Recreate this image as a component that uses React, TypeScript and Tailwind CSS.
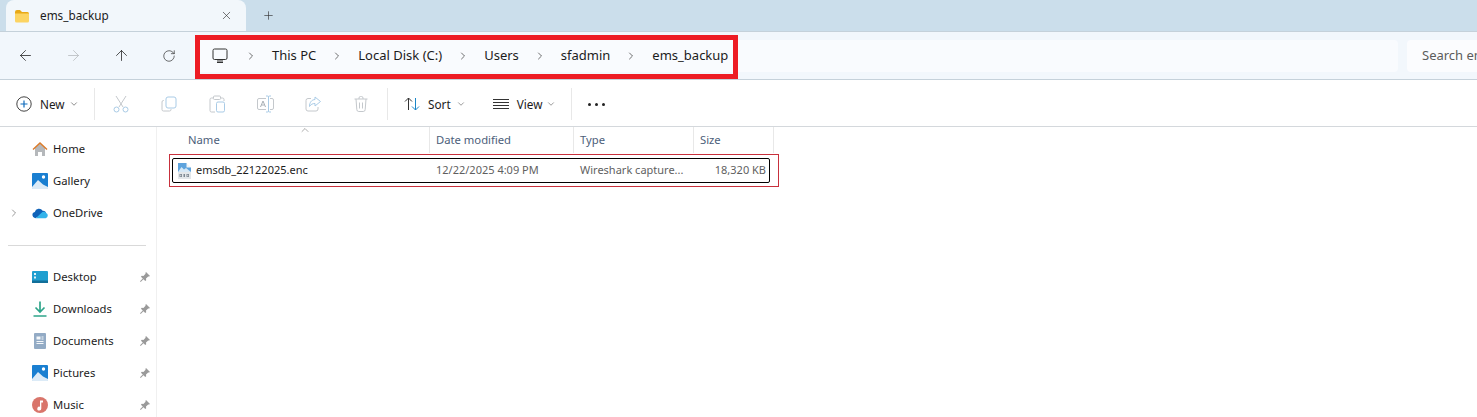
import type React from "react"
import { ArrowLeft, ArrowRight, ArrowUp, ChevronDown, ChevronRight, ChevronUp, Plus, RotateCw, X } from "lucide-react"

const FONT = "font-['Noto_Sans','Open_Sans',sans-serif]"

const Folder = () => (
  <svg width="16" height="14" viewBox="0 0 16 14">
    <path d="M1 3a2 2 0 0 1 2-2h3l2 2h5.500a1.500 1.500 0 0 1 1.500 1.500V5H1z" fill="#e8a917" />
    <path d="M1 4.500h14V12a1.500 1.500 0 0 1-1.500 1.500h-11A1.500 1.500 0 0 1 1 12z" fill="#fcd462" />
  </svg>
)

const Monitor = () => (
  <svg width="16" height="16" viewBox="0 0 16 16" fill="none" stroke="#333" strokeWidth="1">
    <rect x="1" y="1" width="14" height="10.500" rx="1.500" />
    <path d="M5 14.500h6M8 11.500v3M6 11.500v3M10 11.500v3" />
  </svg>
)

// toolbar glyphs: grey body with the light blue accent of the disabled state
const Cut = () => (
  <svg width="16" height="18" viewBox="0 0 16 18" fill="none" strokeWidth="1">
    <path d="M3 1l7 11M13 1L6 12" stroke="#c4c8cc" />
    <circle cx="3.500" cy="14.500" r="2.500" stroke="#a9cbe6" />
    <circle cx="12.500" cy="14.500" r="2.500" stroke="#a9cbe6" />
  </svg>
)
const Copy = () => (
  <svg width="16" height="16" viewBox="0 0 16 16" fill="none" strokeWidth="1">
    <path d="M3 4.500h-.5A1.500 1.500 0 0 0 1 6v7.500A1.500 1.500 0 0 0 2.500 15h6A1.500 1.500 0 0 0 10 13.500V13" stroke="#c4c8cc" />
    <rect x="5" y="1" width="10" height="11" rx="2" stroke="#a9cbe6" />
  </svg>
)
const Paste = () => (
  <svg width="16" height="18" viewBox="0 0 16 18" fill="none" strokeWidth="1">
    <path d="M4 3H2.500A1.500 1.500 0 0 0 1 4.500v11A1.500 1.500 0 0 0 2.500 17H6M12 3h1.500A1.500 1.500 0 0 1 15 4.500V6" stroke="#c4c8cc" />
    <rect x="4.500" y="1" width="7" height="3.500" rx="1" stroke="#c4c8cc" />
    <rect x="7.500" y="7" width="8" height="10" rx="1.500" stroke="#a9cbe6" />
  </svg>
)
const Rename = () => (
  <svg width="17" height="18" viewBox="0 0 17 18" fill="none" strokeWidth="1">
    <path d="M9 3.500H2A1.500 1.500 0 0 0 .5 5v8A1.500 1.500 0 0 0 2 14.500h7M13 3.500h2A1.500 1.500 0 0 1 16.500 5v8a1.500 1.500 0 0 1-1.500 1.500h-2" stroke="#c4c8cc" />
    <path d="M3.500 12l2.500-6 2.500 6M4.500 10h3" stroke="#a9b0b6" />
    <path d="M9 1h1.500a1 1 0 0 1 1 1v14a1 1 0 0 1-1 1H9M14 1h-1.500a1 1 0 0 0-1 1M14 17h-1.500a1 1 0 0 1-1-1" stroke="#a9cbe6" />
  </svg>
)
const Share = () => (
  <svg width="16" height="16" viewBox="0 0 16 16" fill="none" strokeWidth="1">
    <path d="M6 2.500H3A2 2 0 0 0 1 4.500V13a2 2 0 0 0 2 2h8a2 2 0 0 0 2-2v-2" stroke="#c4c8cc" />
    <path d="M10 1l5.500 4.500L10 10V7.500c-2.500 0-4 .8-5.500 3C4.500 6.500 6.500 3.800 10 3.500z" stroke="#a9cbe6" />
  </svg>
)
const Trash = () => (
  <svg width="14" height="16" viewBox="0 0 14 16" fill="none" stroke="#c4c8cc" strokeWidth="1">
    <path d="M.5 3h13M5 3V2a1.500 1.500 0 0 1 1.500-1.500h1A1.500 1.500 0 0 1 9 2v1M2 3l.8 10.500A2 2 0 0 0 4.800 15.500h4.400a2 2 0 0 0 2-2L12 3M5.500 6.500v6M8.500 6.500v6" />
  </svg>
)
const Sort = () => (
  <svg width="16" height="14" viewBox="0 0 16 14" fill="none" strokeWidth="1">
    <path d="M4.500 13V1M1 4.500L4.500 1 8 4.500" stroke="#333" />
    <path d="M11.500 1v12M8 9.500l3.500 3.500L15 9.500" stroke="#1a86c8" />
  </svg>
)
const ViewIcon = () => (
  <svg width="16" height="10" viewBox="0 0 16 10" fill="none" stroke="#333" strokeWidth="1">
    <path d="M0 .5h16M0 3.500h16M0 6.500h16M0 9.500h16" />
  </svg>
)
const NewIcon = () => (
  <svg width="16" height="16" viewBox="0 0 16 16" fill="none" strokeWidth="1">
    <circle cx="8" cy="8" r="7.200" stroke="#444" />
    <path d="M8 4.500v7M4.500 8h7" stroke="#0f6cbd" strokeWidth="1.200" />
  </svg>
)

const Home = () => (
  <svg width="16" height="16" viewBox="0 0 16 16">
    <path d="M3 7l5-4.500L13 7v7.500a.5.5 0 0 1-.5.5H10v-4H6v4H3.500a.5.5 0 0 1-.5-.5z" fill="#b5b8bb" />
    <path d="M.5 8L8 1l7.500 7-1 1L8 3 1.500 9z" fill="#db7b2b" />
  </svg>
)
const Gallery = () => (
  <svg width="16" height="16" viewBox="0 0 16 16">
    <rect x="0" y="0" width="16" height="16" rx="1" fill="#1a7fd1" />
    <circle cx="11.500" cy="4" r="1.700" fill="#fff" />
    <path d="M0 14l6-7 5 4.500 5 2.500v1.500a.5.5 0 0 1-.5.5H.5a.5.5 0 0 1-.5-.5z" fill="#dcebf7" />
  </svg>
)
const OneDrive = () => (
  <svg width="17" height="12" viewBox="0 0 17 12">
    <path d="M3.500 11.500a3.300 3.300 0 0 1-.5-6.500 4.500 4.500 0 0 1 8.300-1.300A3.800 3.800 0 0 1 15 5.500z" fill="#0f62b8" />
    <path d="M4 11.500L11 5a3.400 3.400 0 0 1 4 1 2.900 2.900 0 0 1-.5 5.500z" fill="#33b3ea" />
  </svg>
)
const Desktop = () => (
  <svg width="16" height="12" viewBox="0 0 16 12">
    <rect width="16" height="12" rx="1" fill="#1f9fd0" />
    <rect y="9.500" width="16" height="2.500" fill="#126f99" />
    <rect x="2" y="2" width="2" height="2" fill="#dff3fa" />
    <rect x="2" y="5.500" width="2" height="2" fill="#dff3fa" />
  </svg>
)
const Downloads = () => (
  <svg width="14" height="16" viewBox="0 0 14 16" fill="none" stroke="#2fa58a" strokeWidth="1.700">
    <path d="M7 .5v10M2.500 6.500L7 11l4.500-4.500M.5 15h13" />
  </svg>
)
const Documents = () => (
  <svg width="12" height="16" viewBox="0 0 12 16">
    <rect width="12" height="16" rx="1" fill="#93abc5" />
    <path d="M2.500 3.500h4v3h-4zM7.500 3.500h2v1h-2zM7.500 5.500h2v1h-2zM2.500 8h7v1h-7zM2.500 10h7v1h-7z" fill="#f4f7fa" />
  </svg>
)
const Music = () => (
  <svg width="16" height="16" viewBox="0 0 16 16">
    <circle cx="8" cy="8" r="8" fill="#d9756b" />
    <path d="M8 3.500h3v2H9.300v6a2 2 0 1 1-1.300-1.800z" fill="#fff" />
  </svg>
)
const Pin = () => (
  <svg width="10" height="10" viewBox="0 0 10 10" fill="#9a9a9a">
    <path d="M6 0l4 4-1 .6-.8-.2L6 6.600l.2 1.600-.9.900L3.400 7.200.7 10 0 9.300l2.800-2.700L.9 4.700l.9-.9 1.600.2L5.600 1.800 5.400 1z" />
  </svg>
)
const FileIcon = () => (
  <svg width="13" height="16" viewBox="0 0 13 16">
    <path d="M0 0h8.500L13 4.500V16H0z" fill="#f1f4f6" />
    <path d="M0 0h8.500v4.500L13 4.500V9H0z" fill="#5ea3dd" />
    <path d="M0 9l3.500-5L6 6.500 8 5l5 4z" fill="#d5e8f6" />
    <rect x="0" y="9" width="13" height="7" fill="#e3e7ea" />
    <path d="M1.500 11h2.500v3H1.500zM5.500 11h1.500v3H5.500zM8.500 11H11v3H8.500z" fill="#7c8791" />
    <path d="M2.300 11.800h.9v1.400h-.9zM9.300 11.800h.9v1.400h-.9z" fill="#e3e7ea" />
  </svg>
)

const NavItem: React.FC<{ icon: React.ReactNode; label: string; pinned?: boolean; expandable?: boolean }> = ({ icon, label, pinned, expandable }) => (
  <div className="h-8 flex items-center text-[11.25px] text-[#1c1c1c]">
    <span className="w-[32px] flex justify-end pr-[12px]">
      {expandable && <ChevronRight size={12} className="text-[#777]" strokeWidth={1.500} />}
    </span>
    <span className="w-[21px] h-8 flex items-center"><span className="w-4 flex justify-center">{icon}</span></span>
    <span className="flex-1 leading-none">{label}</span>
    {pinned && <span className="mr-[6px]"><Pin /></span>}
  </div>
)

const ToolIcon: React.FC<{ children: React.ReactNode }> = ({ children }) => (
  <span className="w-12 h-5 flex items-center justify-center">{children}</span>
)

const Crumb: React.FC<{ label: string }> = ({ label }) => (
  <>
    <ChevronRight size={12} className="text-[#333] mx-[15px] shrink-0" strokeWidth={1.400} />
    <span className="whitespace-nowrap">{label}</span>
  </>
)

const Divider = () => <span className="w-px h-[32px] bg-[#e8e8e8]" />

export default function App() {
  return (
    <div className={`${FONT} relative w-[1477px] h-[417px] overflow-hidden bg-white flex flex-col text-[12px] text-[#1c1c1c]`}>
      {/* tab strip */}
      <div className="h-[31px] bg-[#cbdeeb] flex items-end pl-[6px] shrink-0">
        <div className="w-[240px] h-[31px] bg-[#f2f7fb] rounded-t-[8px] flex items-center pl-[8px]">
          <Folder />
          <span className="ml-[10px] flex-1 text-[11.75px]">ems_backup</span>
          <X size={13} className="mr-[13px] text-[#333]" strokeWidth={1.200} />
        </div>
        <Plus size={13} className="ml-[16px] mb-[9px] text-[#333]" strokeWidth={1.200} />
      </div>

      {/* address row */}
      <div className="h-[49px] bg-[#f2f7fc] border-y border-[#c5d1da] flex items-center shrink-0">
        <div className="flex items-center w-[193px] pl-px">
          <span className="w-12 flex justify-center"><ArrowLeft size={17} strokeWidth={1.100} className="text-[#222]" /></span>
          <span className="w-12 flex justify-center"><ArrowRight size={17} strokeWidth={1.100} className="text-[#b6b9bc]" /></span>
          <span className="w-12 flex justify-center"><ArrowUp size={17} strokeWidth={1.100} className="text-[#222]" /></span>
          <span className="w-12 flex justify-center"><RotateCw size={14} strokeWidth={1.100} className="text-[#222]" /></span>
        </div>
        <div className="w-[1204px] h-[32px] ml-[1px] bg-[#f9fbfe] rounded-[4px] flex items-center pl-[18px] text-[13px]">
          <Monitor />
          <ChevronRight size={12} className="text-[#333] ml-[17px] mr-[15px] shrink-0" strokeWidth={1.400} />
          <span className="whitespace-nowrap">This PC</span>
          <Crumb label="Local Disk (C:)" />
          <Crumb label="Users" />
          <Crumb label="sfadmin" />
          <Crumb label="ems_backup" />
        </div>
        <div className="ml-[9px] flex-1 h-[32px] bg-[#fbfcfe] rounded-l-[4px] flex items-center pl-[15px] text-[#5c5c5c] text-[13px] whitespace-nowrap overflow-hidden">
          Search ems_backup
        </div>
      </div>

      {/* command bar */}
      <div className="h-[47px] bg-white border-b border-[#d4d8dc] flex items-center shrink-0 pt-[2px] text-[11.75px]">
        <div className="flex items-center w-[94px] pl-4">
          <NewIcon />
          <span className="ml-2 pt-[2px]">New</span>
          <ChevronDown size={10} className="ml-[4px] text-[#777]" />
        </div>
        <Divider />
        <div className="flex items-center pl-[2px] w-[292px]">
          <ToolIcon><Cut /></ToolIcon>
          <ToolIcon><Copy /></ToolIcon>
          <ToolIcon><Paste /></ToolIcon>
          <ToolIcon><Rename /></ToolIcon>
          <ToolIcon><Share /></ToolIcon>
          <ToolIcon><Trash /></ToolIcon>
        </div>
        <Divider />
        <div className="flex items-center w-[183px] pl-4">
          <Sort />
          <span className="ml-2 pt-[2px]">Sort</span>
          <ChevronDown size={10} className="ml-[5px] text-[#888]" />
          <span className="ml-[27px]"><ViewIcon /></span>
          <span className="ml-2 pt-[2px]">View</span>
          <ChevronDown size={10} className="ml-[4px] text-[#888]" />
        </div>
        <Divider />
        <span className="ml-[16px] flex gap-[4px]">
          <i className="w-[3px] h-[3px] rounded-full bg-[#222]" />
          <i className="w-[3px] h-[3px] rounded-full bg-[#222]" />
          <i className="w-[3px] h-[3px] rounded-full bg-[#222]" />
        </span>
      </div>

      <div className="flex flex-1 min-h-0">
        {/* navigation pane */}
        <div className="w-[157px] shrink-0 border-r border-[#f0f0f0] pt-[6px]">
          <NavItem icon={<Home />} label="Home" />
          <NavItem icon={<Gallery />} label="Gallery" />
          <NavItem icon={<OneDrive />} label="OneDrive" expandable />
          <div className="h-[32px] flex items-center"><div className="ml-2 w-[138px] h-px bg-[#d9d9d9]" /></div>
          <NavItem icon={<Desktop />} label="Desktop" pinned />
          <NavItem icon={<Downloads />} label="Downloads" pinned />
          <NavItem icon={<Documents />} label="Documents" pinned />
          <NavItem icon={<Gallery />} label="Pictures" pinned />
          <NavItem icon={<Music />} label="Music" pinned />
        </div>

        {/* file list */}
        <div className="flex-1 relative">
          <div className="grid grid-cols-[273px_144px_120px_80px] h-[26px] w-[617px] items-center text-[#4c607a] text-[11.25px]">
            <span className="pl-[31px] border-r border-[#e8e8e8] h-full flex items-center">Name</span>
            <span className="pl-[6px] border-r border-[#e8e8e8] h-full flex items-center">Date modified</span>
            <span className="pl-[6px] border-r border-[#e8e8e8] h-full flex items-center">Type</span>
            <span className="pl-[6px] border-r border-[#e8e8e8] h-full flex items-center">Size</span>
          </div>
          <ChevronUp size={12} className="absolute left-[142px] -top-[3px] text-[#777]" strokeWidth={1.200} />
          <div className="grid grid-cols-[257px_144px_120px_75px] w-[598px] h-[25px] mt-[5px] ml-[15px] items-center border border-black rounded-[2px] text-[#5f5f5f] text-[11px]">
            <span className="flex items-center pl-[5px] text-[#1c1c1c]">
              <FileIcon />
              <span className="ml-[5px]">emsdb_22122025.enc</span>
            </span>
            <span className="pl-[6px]">12/22/2025 4:09 PM</span>
            <span className="pl-[6px] whitespace-nowrap">Wireshark capture...</span>
            <span className="text-right pr-[3px] whitespace-nowrap">18,320 KB</span>
          </div>
        </div>
      </div>

      {/* red annotation boxes drawn over the window */}
      <div className="absolute left-[195px] top-[35px] w-[543px] h-[44px] border-[5px] border-[#ed1c24] pointer-events-none" />
      <div className="absolute left-[169px] top-[154px] w-[610px] h-[33px] border border-[#c8303c] pointer-events-none" />
    </div>
  )
}
